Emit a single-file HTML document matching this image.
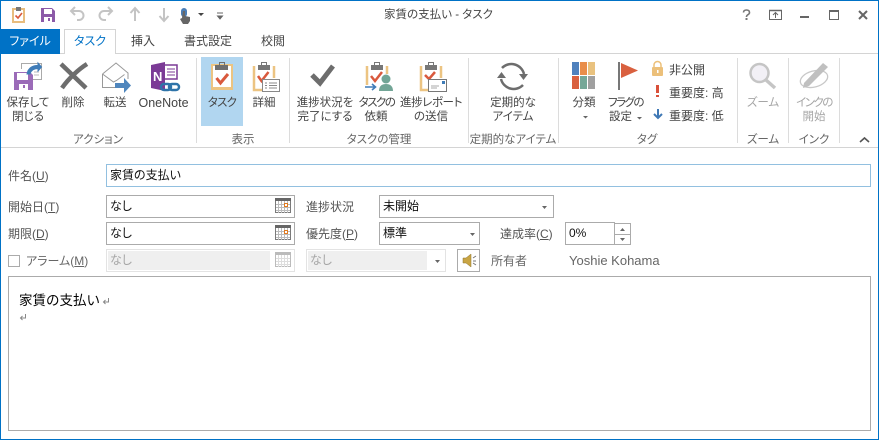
<!DOCTYPE html>
<html lang="ja"><head><meta charset="utf-8"><title>家賃の支払い - タスク</title>
<style>
html,body{margin:0;padding:0;background:#fff}
body{width:879px;height:440px;position:relative;overflow:hidden;font-family:"Liberation Sans","Noto Sans CJK JP",sans-serif;font-size:11.5px;color:#444;font-feature-settings:"palt"}
.t{position:absolute;white-space:nowrap;line-height:15px}
.c{text-align:center;transform:translateX(-50%)}
.b{position:absolute;box-sizing:border-box;background:#fff}
.sep{position:absolute;width:1px;top:58px;height:85px;background:#dcdcdc}
.in{border:1px solid #ababab}
.lab{font-size:12px;color:#555}
.val{font-size:12px;color:#111}
.dis{color:#a6a6a6}
u{text-underline-offset:1px}
svg{position:absolute;overflow:visible}
</style></head><body>
<!-- window border -->
<div class="b" style="left:0;top:0;width:879px;height:440px;border:1px solid #0072c6;z-index:9;background:none"></div>
<div class="b" style="left:0;top:53px;width:879px;height:1px;background:#d4d4d4"></div>
<div class="b" style="left:0;top:147px;width:879px;height:1px;background:#d4d4d4"></div>

<!-- QAT -->
<svg style="left:0;top:0" width="240" height="30" viewBox="0 0 240 30">
<rect x="13" y="9" width="11" height="13" fill="#fff" stroke="#e8bd7e" stroke-width="2"/>
<rect x="16" y="7" width="5" height="4" fill="#777"/>
<path d="M15.500 15.500l2.500 2.500 4-5" fill="none" stroke="#d9593d" stroke-width="1.600"/>
<path d="M41 8h11l3 3v11H41z" fill="#8c5aa8"/><rect x="44" y="9" width="8" height="5" fill="#fff"/><rect x="44" y="17" width="8" height="5" fill="#fff"/><rect x="48" y="18" width="2" height="3" fill="#8c5aa8"/>
<g fill="none" stroke="#c4c4c4" stroke-width="2">
<path d="M72 11h7a4.500 4.500 0 0 1 0 9h-2"/><path d="M75 7l-4 4 4 4"/>
<path d="M111 11h-7a4.500 4.500 0 0 0 0 9h2"/><path d="M108 7l4 4-4 4"/>
<path d="M135 21V9M130.500 13l4.500-5 4.500 5"/>
<path d="M164 8v12M159.500 16l4.500 5 4.500-5"/>
</g>
<rect x="181" y="8" width="6" height="9" rx="3" fill="#4a7db5"/>
<path d="M183 11h2v5l5 1v4l-2 3h-5l-3-5 2-1z" fill="#666"/>
<path d="M198 13h6l-3 3z" fill="#444"/>
<path d="M217 13h6M217.500 16h5l-2.500 3z" stroke="#666" stroke-width="1" fill="#666"/>
</svg>

<div class="t c" style="left:438.500px;top:8px;font-size:11.500px;color:#444">家賃の支払い - タスク</div>

<!-- window controls -->
<svg style="left:0;top:0" width="879" height="30" viewBox="0 0 879 30">
<path d="M743.500 12.500q0-2.500 3-2.500t3 2.500q0 1.500-2 2.500-1 .6-1 2" fill="none" stroke="#777" stroke-width="1.600"/><rect x="745.500" y="18" width="2" height="2" fill="#777"/>
<rect x="769.500" y="10.500" width="12" height="9" fill="none" stroke="#666"/><path d="M769 10.500h13" stroke="#666" stroke-width="1.500"/><path d="M775.500 18v-5M773 15l2.500-2.500 2.500 2.500" fill="none" stroke="#666"/>
<rect x="800" y="16" width="9" height="2" fill="#666"/>
<rect x="829.500" y="10.500" width="9" height="9" fill="none" stroke="#666"/><rect x="829" y="10" width="10" height="2" fill="#666"/>
<path d="M859 11l8 8M867 11l-8 8" stroke="#666" stroke-width="2"/>
</svg>

<!-- tabs -->
<div class="b" style="left:1px;top:29px;width:59px;height:25px;background:#0072c6"></div>
<div class="t c" style="left:30px;top:34px;color:#fff;font-size:12px">ファイル</div>
<div class="b" style="left:64px;top:29px;width:52px;height:25px;border:1px solid #d4d4d4;border-bottom:none"></div>
<div class="t c" style="left:90px;top:34px;color:#0072c6;font-size:12px">タスク</div>
<div class="t c" style="left:143px;top:34px;font-size:12px">挿入</div>
<div class="t c" style="left:208px;top:34px;font-size:12px">書式設定</div>
<div class="t c" style="left:273px;top:34px;font-size:12px">校閲</div>

<!-- separators -->
<div class="sep" style="left:196px"></div><div class="sep" style="left:289px"></div><div class="sep" style="left:468px"></div><div class="sep" style="left:558px"></div><div class="sep" style="left:737px"></div><div class="sep" style="left:788px"></div><div class="sep" style="left:839px"></div>
<div class="b" style="left:201px;top:57px;width:42px;height:69px;background:#b1d6f0"></div>

<!-- ribbon icons -->
<svg style="left:0;top:0" width="879" height="148" viewBox="0 0 879 148">
<!-- save & close -->
<path d="M21.500 69v-5.500H41.500v16H33" fill="#fff" stroke="#aaa"/>
<path d="M34 72h5M34 75h5" stroke="#bbb"/>
<path d="M14 72h16l3 3v15H14z" fill="#9b6bb8"/><rect x="17" y="73" width="11" height="7" fill="#fff"/><rect x="19" y="84" width="9" height="6" fill="#fff"/><rect x="23" y="85" width="2" height="3" fill="#9b6bb8"/>
<path d="M27 74c1-6 6-9 11-8.500v-2.500l3.500 4-3.500 4v-2.500c-4 0-7 2-8 5.500z" fill="#3f7cb8" stroke="#3f7cb8"/>
<!-- delete -->
<path d="M61 64l25 24M87 64c-8 5-18 14-25 24" fill="none" stroke="#6d6d6d" stroke-width="4.500"/>
<!-- forward -->
<path d="M102.500 74l13.500-11 12 10v6M102.500 74v13.500H116M102.500 74l11 8 3-1.500 8-6" fill="#fff" stroke="#999" stroke-width="1"/>
<rect x="115" y="83" width="11" height="5" fill="#4f86bd"/><path d="M124 78l7 7.500-7 7.500v-4z" fill="#4f86bd"/>
<!-- onenote -->
<path d="M151 65l14-3v29l-14-3z" fill="#7b3a96"/><text x="153" y="81" font-size="13" font-weight="bold" fill="#fff" font-family="Liberation Sans">N</text>
<path d="M165 65h12v14h-12" fill="#fff" stroke="#7b3a96" stroke-width="1.500"/><path d="M167 69h8M167 72h8M167 75h8" stroke="#7b3a96"/>
<g fill="none" stroke="#2e74a9" stroke-width="2.500"><rect x="161" y="84" width="10" height="6" rx="3"/><rect x="169" y="84" width="10" height="6" rx="3"/></g>
<!-- task clip -->
<path d="M212 65h20v24h-20z" fill="#fff" stroke="#ecc482" stroke-width="2"/><rect x="211" y="87" width="22" height="3" fill="#ecc482"/><rect x="215" y="65" width="13" height="5" fill="#6f6f6f"/><rect x="219.500" y="62.500" width="5" height="4" fill="none" stroke="#6f6f6f"/>
<path d="M216.500 78l4 5 7.500-9" fill="none" stroke="#d9593d" stroke-width="3"/>
<!-- details -->
<path d="M254 66v24h9M274 66v12" fill="none" stroke="#ecc482" stroke-width="2.500"/><rect x="258" y="65" width="12" height="5" fill="#777"/><rect x="261.500" y="62.500" width="5" height="4" fill="none" stroke="#777"/>
<path d="M258 76l3.500 5 7-9" fill="none" stroke="#d9593d" stroke-width="2.500"/>
<rect x="262.500" y="79.500" width="17" height="12" fill="#fff" stroke="#888"/><path d="M265 83h2M269 83h8M265 85.500h2M269 85.500h8M265 88h2M269 88h8" stroke="#888"/>
<!-- check -->
<path d="M312 75l8 8 13-17" fill="none" stroke="#6d6d6d" stroke-width="5"/>
<!-- assign -->
<path d="M367 66v19M387 66v8" fill="none" stroke="#ecc482" stroke-width="2.500"/><rect x="371" y="65" width="12" height="5" fill="#777"/><rect x="374.500" y="62.500" width="5" height="4" fill="none" stroke="#777"/>
<path d="M371 76l4 5 7-9" fill="none" stroke="#d9593d" stroke-width="2.500"/>
<circle cx="386" cy="79" r="4.500" fill="#72a596"/><path d="M379 91c0-5 3-7 7-7s7 2 7 7z" fill="#72a596"/>
<path d="M365 87h10M372 84l3.500 3-3.500 3" fill="none" stroke="#3f7cb8" stroke-width="1.600"/>
<!-- report -->
<path d="M421 66v24h7M441 66v12" fill="none" stroke="#ecc482" stroke-width="2.500"/><rect x="425" y="65" width="12" height="5" fill="#777"/><rect x="428.500" y="62.500" width="5" height="4" fill="none" stroke="#777"/>
<path d="M425 75l4 4 6-7" fill="none" stroke="#d9593d" stroke-width="2.500"/>
<rect x="428.500" y="79.500" width="18" height="12" fill="#fff" stroke="#777"/><rect x="442" y="81" width="3" height="3" fill="#3f7cb8"/><path d="M431 86h8M431 88h6" stroke="#aaa"/>
<!-- recurrence -->
<g fill="none" stroke="#6d6d6d" stroke-width="2.500"><path d="M502 68a13 13 0 0 1 22 6"/><path d="M523 85a13 13 0 0 1-22-6"/></g>
<path d="M519 74h9l-4.500 6zM497 78h9l-4.500-6z" fill="#6d6d6d"/>
<!-- categorize -->
<rect x="572" y="62" width="7" height="13" fill="#4f81bd"/><rect x="580" y="62" width="7" height="13" fill="#e98e4a"/><rect x="588" y="62" width="7" height="13" fill="#e9c27f"/>
<rect x="572" y="76" width="7" height="13" fill="#d9603f"/><rect x="580" y="76" width="7" height="13" fill="#76a898"/><rect x="588" y="76" width="7" height="13" fill="#a0a0a0"/>
<path d="M583 116h5l-2.500 2.500z" fill="#666"/>
<!-- flag -->
<rect x="618" y="62" width="2" height="28" fill="#777"/><path d="M621 63l17 7.500-17 7.500z" fill="#d9603f"/>
<path d="M637 117h5l-2.500 2.500z" fill="#666"/>
<!-- small tags -->
<rect x="652" y="67" width="11" height="9" rx="1" fill="#ecc07a"/><path d="M654 67v-2a3.500 3.500 0 0 1 7 0v2" fill="none" stroke="#ecc07a" stroke-width="1.500"/><rect x="657" y="70" width="1.500" height="3" fill="#fff"/>
<rect x="656" y="85" width="3" height="8" fill="#d9503a"/><rect x="656" y="95" width="3" height="2" fill="#d9503a"/>
<path d="M658 109v9M654 114l4 4 4-4" fill="none" stroke="#3f78b5" stroke-width="2"/>
<!-- zoom -->
<circle cx="759.500" cy="73" r="9" fill="#f2f0f6" stroke="#c5c5c5" stroke-width="2.500"/><path d="M766 80l9 8" stroke="#c5c5c5" stroke-width="3.500"/>
<!-- ink -->
<ellipse cx="814" cy="79" rx="14" ry="8" transform="rotate(-15 814 79)" fill="none" stroke="#c8c8c8" stroke-width="1.300"/>
<path d="M803 88l1-5 19-20 5 4-19 19z" fill="#c0c0c0"/>
<!-- collapse chevron -->
<path d="M860 142l4.500-4 4.500 4" fill="none" stroke="#555" stroke-width="1.600"/>
</svg>

<!-- ribbon labels -->
<div class="t c" style="left:28px;top:96px">保存して</div><div class="t c" style="left:28px;top:110px">閉じる</div>
<div class="t c" style="left:73px;top:96px">削除</div>
<div class="t c" style="left:115px;top:96px">転送</div>
<div class="t c" style="left:163.500px;top:96px;font-size:12.500px">OneNote</div>
<div class="t c" style="left:222px;top:96px;letter-spacing:-.8px">タスク</div>
<div class="t c" style="left:264px;top:96px">詳細</div>
<div class="t c" style="left:325px;top:96px">進捗状況を</div><div class="t c" style="left:325px;top:110px">完了にする</div>
<div class="t c" style="left:376.500px;top:96px;letter-spacing:-1.500px">タスクの</div><div class="t c" style="left:376px;top:110px">依頼</div>
<div class="t c" style="left:431px;top:96px;letter-spacing:-.4px">進捗レポート</div><div class="t c" style="left:431px;top:110px">の送信</div>
<div class="t c" style="left:513px;top:96px">定期的な</div><div class="t c" style="left:513px;top:110px">アイテム</div>
<div class="t c" style="left:584px;top:96px">分類</div>
<div class="t c" style="left:625.500px;top:96px;letter-spacing:-1.500px">フラグの</div><div class="t" style="left:609px;top:110px">設定</div>
<div class="t" style="left:669px;top:63px;font-size:12px">非公開</div>
<div class="t" style="left:669px;top:86px;font-size:12px">重要度: 高</div>
<div class="t" style="left:669px;top:109px;font-size:12px">重要度: 低</div>
<div class="t c dis" style="left:763px;top:96px">ズーム</div>
<div class="t c dis" style="left:814px;top:96px;letter-spacing:-1.500px">インクの</div><div class="t c dis" style="left:814px;top:110px">開始</div>

<div class="t c" style="left:98px;top:133px;color:#666">アクション</div>
<div class="t c" style="left:243px;top:133px;color:#666">表示</div>
<div class="t c" style="left:379px;top:133px;color:#666">タスクの管理</div>
<div class="t c" style="left:513px;top:133px;color:#666">定期的なアイテム</div>
<div class="t c" style="left:647px;top:133px;color:#666">タグ</div>
<div class="t c" style="left:763px;top:133px;color:#666">ズーム</div>
<div class="t c" style="left:814px;top:133px;color:#666">インク</div>

<!-- form -->
<div class="t lab" style="left:8px;top:169px">件名(<u>U</u>)</div>
<div class="b" style="left:106px;top:164px;width:765px;height:23px;border:1px solid #92c0e0"></div>
<div class="t val" style="left:110px;top:168px">家賃の支払い</div>

<div class="t lab" style="left:8px;top:200px">開始日(<u>T</u>)</div>
<div class="b in" style="left:106px;top:195px;width:189px;height:23px"></div>
<div class="t val" style="left:110px;top:199px">なし</div>
<div class="t lab" style="left:8px;top:227px">期限(<u>D</u>)</div>
<div class="b in" style="left:106px;top:222px;width:189px;height:23px"></div>
<div class="t val" style="left:110px;top:226px">なし</div>

<div class="b" style="left:8px;top:255px;width:12px;height:12px;border:1px solid #ababab"></div>
<div class="t" style="left:26px;top:254px;color:#666;font-size:12px">アラーム(<u>M</u>)</div>
<div class="b" style="left:106px;top:249px;width:189px;height:23px;border:1px solid #e3e3e3"></div>
<div class="b" style="left:108px;top:251px;width:162px;height:19px;background:#efefef"></div>
<div class="t dis" style="left:110px;top:253px;font-size:12px">なし</div>

<svg style="left:0;top:0" width="300" height="280" viewBox="0 0 300 280">
<g><rect x="275.500" y="198.500" width="15" height="14" fill="#fff" stroke="#7a7a7a"/><rect x="275" y="198" width="16" height="3" fill="#666"/><path d="M278.500 201v12M281.500 201v12M284.500 201v12M287.500 201v12M276 204.500h14M276 207.500h14M276 210.500h14" stroke="#bbb"/><rect x="284.500" y="203.500" width="3" height="3" fill="#fff" stroke="#e07b20"/></g>
<g><rect x="275.500" y="225.500" width="15" height="14" fill="#fff" stroke="#7a7a7a"/><rect x="275" y="225" width="16" height="3" fill="#666"/><path d="M278.500 228v12M281.500 228v12M284.500 228v12M287.500 228v12M276 231.500h14M276 234.500h14M276 237.500h14" stroke="#bbb"/><rect x="284.500" y="230.500" width="3" height="3" fill="#fff" stroke="#e07b20"/></g>
<g><rect x="275.500" y="252.500" width="15" height="14" fill="#fff" stroke="#bbb"/><rect x="275" y="252" width="16" height="3" fill="#bbb"/><path d="M278.500 255v12M281.500 255v12M284.500 255v12M287.500 255v12M276 258.500h14M276 261.500h14M276 264.500h14" stroke="#ddd"/></g>
</svg>

<div class="t lab" style="left:306px;top:200px">進捗状況</div>
<div class="b in" style="left:379px;top:195px;width:175px;height:23px"></div>
<div class="t val" style="left:383px;top:199px">未開始</div>
<div class="t lab" style="left:306px;top:227px">優先度(<u>P</u>)</div>
<div class="b in" style="left:379px;top:222px;width:101px;height:23px"></div>
<div class="t val" style="left:383px;top:226px">標準</div>
<div class="t lab" style="left:500px;top:227px">達成率(<u>C</u>)</div>
<div class="b in" style="left:565px;top:222px;width:50px;height:23px"></div>
<div class="t val" style="left:569px;top:226px">0%</div>
<div class="b" style="left:614px;top:223px;width:17px;height:12px;border:1px solid #ababab"></div>
<div class="b" style="left:614px;top:234px;width:17px;height:11px;border:1px solid #ababab"></div>

<div class="b" style="left:306px;top:249px;width:140px;height:23px;border:1px solid #e3e3e3"></div>
<div class="b" style="left:308px;top:251px;width:119px;height:19px;background:#efefef"></div>
<div class="t dis" style="left:310px;top:253px;font-size:12px">なし</div>
<div class="b in" style="left:457px;top:249px;width:23px;height:23px"></div>
<div class="t" style="left:491px;top:254px;font-size:12px;color:#666">所有者</div>
<div class="t" style="left:569px;top:253px;font-size:13px;color:#666">Yoshie Kohama</div>

<svg style="left:0;top:0" width="879" height="280" viewBox="0 0 879 280">
<path d="M542 206h5l-2.500 3zM470 233h5l-2.500 3zM435 260h5l-2.500 3z" fill="#666"/>
<path d="M620 231h5l-2.500-3zM620 238h5l-2.500 3z" fill="#666"/>
<path d="M463 258h3l5-4v13l-5-4h-3z" fill="#c9a544" stroke="#8d7430" stroke-width=".5"/><path d="M473 258l3-2M473 261h3M473 263l3 2" stroke="#777" fill="none"/>
</svg>

<!-- body -->
<div class="b" style="left:8px;top:276px;width:863px;height:155px;border:1px solid #ababab"></div>
<div class="t" style="left:19px;top:293px;font-size:13.500px;color:#000;line-height:16px;font-feature-settings:normal">家賃の支払い</div>
<svg style="left:0;top:0" width="120" height="330" viewBox="0 0 120 330">
<path d="M108.500 298v4h-5M105.500 300l-2 2 2 2" fill="none" stroke="#888"/>
<path d="M25.500 314v4h-5M22.500 316l-2 2 2 2" fill="none" stroke="#888"/>
</svg>
</body></html>
